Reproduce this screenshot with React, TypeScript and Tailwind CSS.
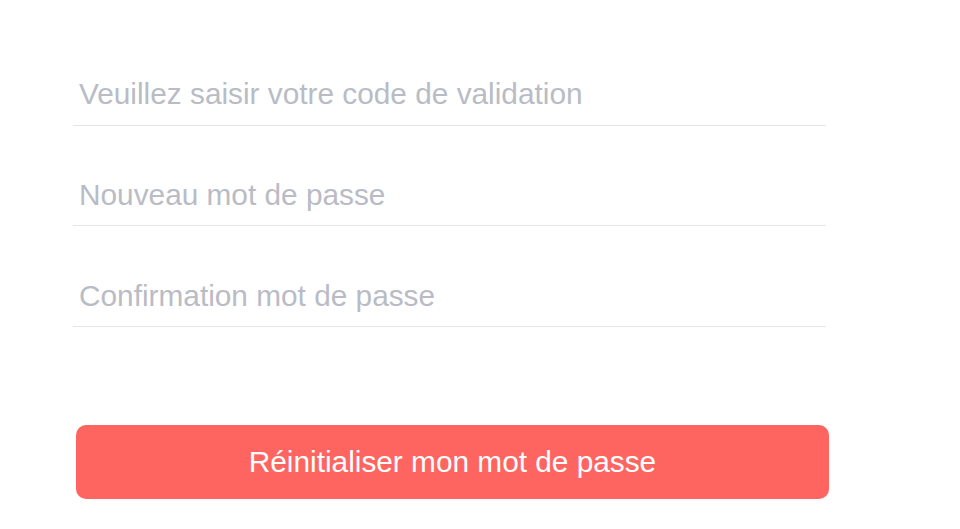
export default function App() {
  const fields = [
    "Veuillez saisir votre code de validation",
    "Nouveau mot de passe",
    "Confirmation mot de passe",
  ];

  return (
    <div className="w-[960px] h-[529px] bg-white font-['Liberation_Sans',Arial,sans-serif] overflow-hidden">
      <form className="flex flex-col w-[753px] ml-[73px] pt-[25px]">
        {fields.map((label) => (
          <div key={label} className="h-[100.7px] flex items-end">
            <input
              type="text"
              placeholder={label}
              className="w-full h-[62px] px-[6px] border-b border-[#e6e7eb] text-[29.8px] text-[#333] placeholder:text-[#b9bcc5] outline-none bg-transparent"
            />
          </div>
        ))}
        <button
          type="button"
          className="mt-[98px] ml-[3px] w-[753px] h-[74px] rounded-[10px] bg-[#ff6560] text-white text-[29.8px]"
        >
          Réinitialiser mon mot de passe
        </button>
      </form>
    </div>
  );
}
